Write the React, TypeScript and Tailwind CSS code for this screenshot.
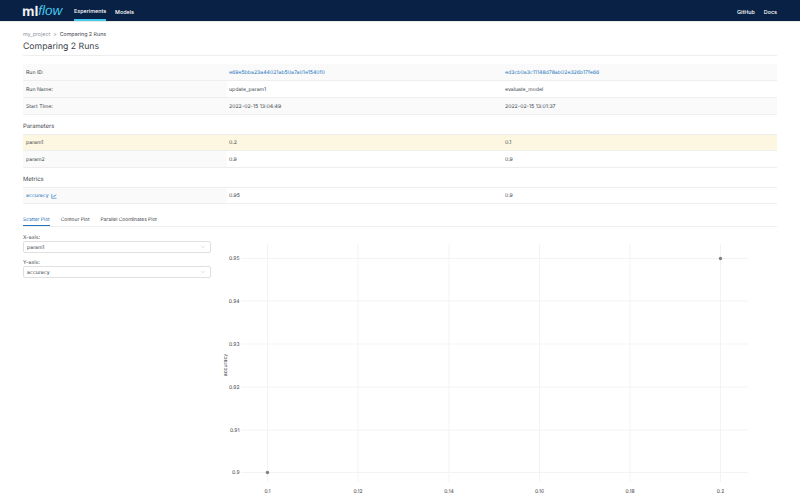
import { ChevronDown } from 'lucide-react';

const ink = 'text-[#3d454c]';

function Row({ label, a, b, shade, link, highlight, top }: {
  label: React.ReactNode; a: string; b: string; shade?: boolean; link?: boolean; highlight?: boolean; top?: boolean;
}) {
  const rowBg = highlight ? 'bg-[#fdf6e0]' : shade ? 'bg-[#fafafa]' : 'bg-white';
  const labelBg = highlight ? 'bg-[#fdf6e0]' : 'bg-[#fafafa]';
  const val = link ? 'text-[#2374bb]' : ink;
  return (
    <div className={`grid grid-cols-[204px_276px_274px] h-[17px] items-stretch border-b border-[#eeeeee] ${top ? 'border-t' : ''} ${rowBg}`}>
      <div className={`flex items-center pl-[3px] pt-[3px] ${labelBg}`}>{label}</div>
      <div className={`flex items-center pl-[2px] pt-[3px] ${val}`}>{a}</div>
      <div className={`flex items-center pl-[2px] pt-[3px] ${val}`}>{b}</div>
    </div>
  );
}

function Select({ value }: { value: string }) {
  return (
    <div className="flex h-[12px] w-[188px] items-center justify-between rounded-[2px] border border-[#e0e0e0] bg-white pl-[3px] pr-[4px]">
      <span className="pt-[3px]">{value}</span>
      <ChevronDown size={6} strokeWidth={1.5} className="text-[#b5b5b5]" />
    </div>
  );
}

function Chart() {
  const xs = [
    [267.5, '0.1'], [358, '0.12'], [449, '0.14'], [539.5, '0.16'], [630, '0.18'], [720.5, '0.2'],
  ] as const;
  const ys = [
    [258.5, '0.95'], [301, '0.94'], [344, '0.93'], [387, '0.92'], [430, '0.91'], [472.5, '0.9'],
  ] as const;
  // svg origin sits at page x=215, y=238
  const ox = 215;
  const oy = 238;
  return (
    <svg width="585" height="262" viewBox="0 0 585 262" className="block">
      {xs.map(([x]) => (
        <line key={x} x1={x - ox} x2={x - ox} y1={244 - oy} y2={482 - oy} stroke="#f3f3f3" strokeWidth="1" />
      ))}
      {ys.map(([y]) => (
        <line key={y} x1={241 - ox} x2={748 - ox} y1={y - oy} y2={y - oy} stroke="#f3f3f3" strokeWidth="1" />
      ))}
      {ys.map(([y, t]) => (
        <text key={t} x={239.5 - ox} y={y - oy + 1.8} textAnchor="end" fontSize="5" fill="#444444" fontFamily="Inter, sans-serif">{t}</text>
      ))}
      {xs.map(([x, t]) => (
        <text key={t} x={x - ox} y={492.5 - oy} textAnchor="middle" fontSize="5" fill="#444444" fontFamily="Inter, sans-serif">{t}</text>
      ))}
      <text transform={`translate(${226.5 - ox} ${365 - oy}) rotate(-90)`} textAnchor="middle" fontSize="5.2" fill="#444444" fontFamily="Inter, sans-serif">accuracy</text>
      <circle cx={720.5 - ox} cy={258.5 - oy} r="1.7" fill="#7f7f8a" />
      <circle cx={267.5 - ox} cy={472.5 - oy} r="1.7" fill="#7f7f8a" />
    </svg>
  );
}

export default function App() {
  return (
    <div className={`h-[500px] w-[800px] overflow-hidden bg-white font-['Inter',sans-serif] text-[5.2px] [text-rendering:geometricPrecision] ${ink}`}>
      {/* Top nav */}
      <header className="flex h-[22px] items-stretch justify-between border-b border-[#e8e8e8] bg-[#082144] pl-[22px] pr-[23px] text-[5.4px] font-medium text-white">
        <div className="flex items-stretch">
          <div className="flex w-[52px] items-center font-['Liberation_Sans',sans-serif] leading-none">
            <span className="text-[14px] font-bold text-[#f2f2f2]">ml</span>
            <span className="text-[13.5px] italic text-[#43c9ed]">flow</span>
          </div>
          <div className="flex w-[32px] items-center justify-center border-b-2 border-[#43c9ed] pt-[5px]">Experiments</div>
          <div className="ml-[9px] flex items-center pt-[6px]">Models</div>
        </div>
        <div className="flex items-center gap-[9px] pt-[6px]">
          <span>GitHub</span>
          <span>Docs</span>
        </div>
      </header>

      <main className="pl-[23px] pr-[23px]">
        <div className="mt-[9px] flex h-[7px] items-center pt-[2px] text-[5.3px]">
          <span className="text-[#8d96a0]">my_project</span>
          <span className="mx-[3px] text-[#8d96a0]">&gt;</span>
          <span>Comparing 2 Runs</span>
        </div>
        <h1 className="mt-[3px] h-[13px] text-[8.7px] leading-[12px] font-normal">Comparing 2 Runs</h1>
        <div className="mt-[1px] border-t border-[#eeeeee]" />

        <div className="mt-[8px]">
          <Row shade link label="Run ID:" a="e69e5bba23a44021ab50a7a01e1540f0" b="ed3cb0a3c11148d78ab02e326b17fe66" />
          <Row label="Run Name:" a="update_param1" b="evaluate_model" />
          <Row shade label="Start Time:" a="2022-02-15 13:04:49" b="2022-02-15 13:01:37" />
        </div>

        <h2 className="mt-[7px] h-[9px] text-[5.8px] leading-[10px] font-normal">Parameters</h2>
        <div className="mt-[3px]">
          <Row top highlight label="param1" a="0.2" b="0.1" />
          <Row label="param2" a="0.9" b="0.9" />
        </div>

        <h2 className="mt-[7px] h-[9px] text-[5.8px] leading-[10px] font-normal">Metrics</h2>
        <div className="mt-[3px]">
          <Row
            top
            label={
              <span className="flex items-center gap-[2px] text-[#2374bb]">
                accuracy
                <svg width="6" height="6" viewBox="0 0 12 12" fill="none" stroke="currentColor" strokeWidth="1.2" className="-mt-[2px]">
                  <path d="M1.5 2v8.5H11" />
                  <path d="M3.5 8l2.5-3 2 1.5L10.5 3" />
                </svg>
              </span>
            }
            a="0.95"
            b="0.9"
          />
        </div>

        <div className="mt-[9px] flex h-[14px] items-stretch gap-[11px] border-b border-[#eeeeee] pt-[1px] text-[4.9px]">
          <div className="flex items-center border-b border-[#2374bb] pt-[2px] text-[#2374bb]">Scatter Plot</div>
          <div className="flex items-center pt-[2px]">Contour Plot</div>
          <div className="flex items-center pt-[2px]">Parallel Coordinates Plot</div>
        </div>

        <div className="-mr-[23px] grid grid-cols-[192px_585px]">
          <div className="pt-[6px]">
            <div className="h-[8px] leading-[10px]">X-axis:</div>
            <Select value="param1" />
            <div className="mt-[5px] h-[8px] leading-[10px]">Y-axis:</div>
            <Select value="accuracy" />
          </div>
          <div className="pt-[11px]">
            <Chart />
          </div>
        </div>
      </main>
    </div>
  );
}
